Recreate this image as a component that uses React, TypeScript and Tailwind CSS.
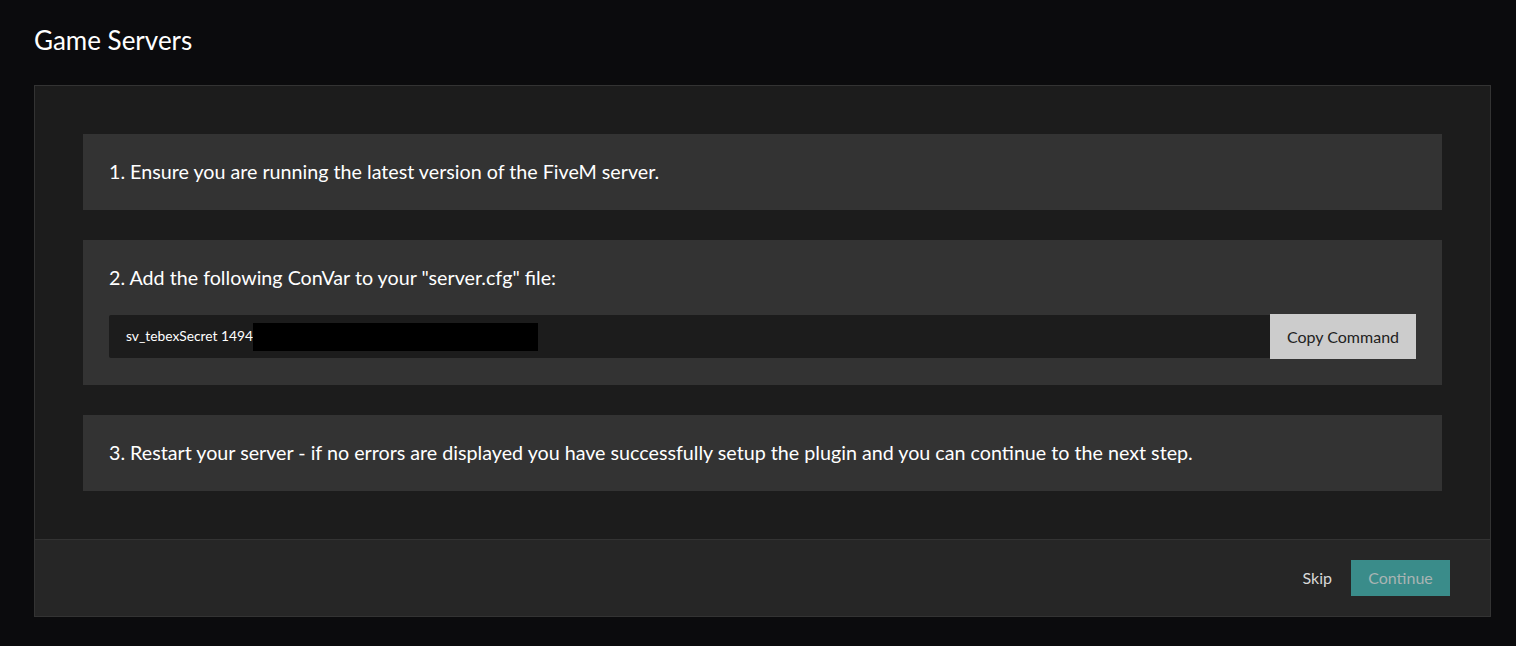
export default function App() {
    const steps = [
        '1. Ensure you are running the latest version of the FiveM server.',
        '3. Restart your server - if no errors are displayed you have successfully setup the plugin and you can continue to the next step.',
    ];

    return (
        <div className="min-h-screen bg-[#0b0b0d] text-white font-['Lato',sans-serif] pl-[34px] pr-[25px] pt-[24px] pb-[29px]">
            <h1 className="text-[26px] leading-[32px] mb-[29px]">Game Servers</h1>

            <div className="border border-[#333333] bg-[#1c1c1c]">
                <div className="px-[48px] py-[48px] flex flex-col gap-[30px]">
                    <div className="bg-[#333333] px-[26px] py-[26px] text-[19.7px] leading-[24px]">{steps[0]}</div>

                    <div className="bg-[#333333] px-[26px] pt-[26px] pb-[26px]">
                        <div className="text-[19.7px] leading-[24px] mb-[24px]">
                            2. Add the following ConVar to your "server.cfg" file:
                        </div>
                        <div className="flex items-stretch">
                            <div className="flex-1 bg-[#1c1c1c] rounded-l-[2px] h-[43px] my-[1px] flex items-center pl-[17px] text-[13.8px]">
                                <span>sv_tebexSecret 1494</span>
                                {/* redacted key */}
                                <span className="inline-block w-[285px] h-[28px] bg-black" />
                            </div>
                            <button className="w-[146px] h-[45px] bg-[#cccccc] text-[#222222] text-[16px]">Copy Command</button>
                        </div>
                    </div>

                    <div className="bg-[#333333] px-[26px] py-[26px] text-[19.7px] leading-[24px]">{steps[1]}</div>
                </div>

                <div className="bg-[#262626] border-t border-[#333333] h-[77px] flex items-center justify-end pr-[40px] gap-[19px]">
                    <button className="text-[16px] text-[#d8d8d8]">Skip</button>
                    <button className="w-[99px] h-[36px] bg-[#3a8c8a] text-[#a9b4b3] text-[16px]">Continue</button>
                </div>
            </div>
        </div>
    );
}
